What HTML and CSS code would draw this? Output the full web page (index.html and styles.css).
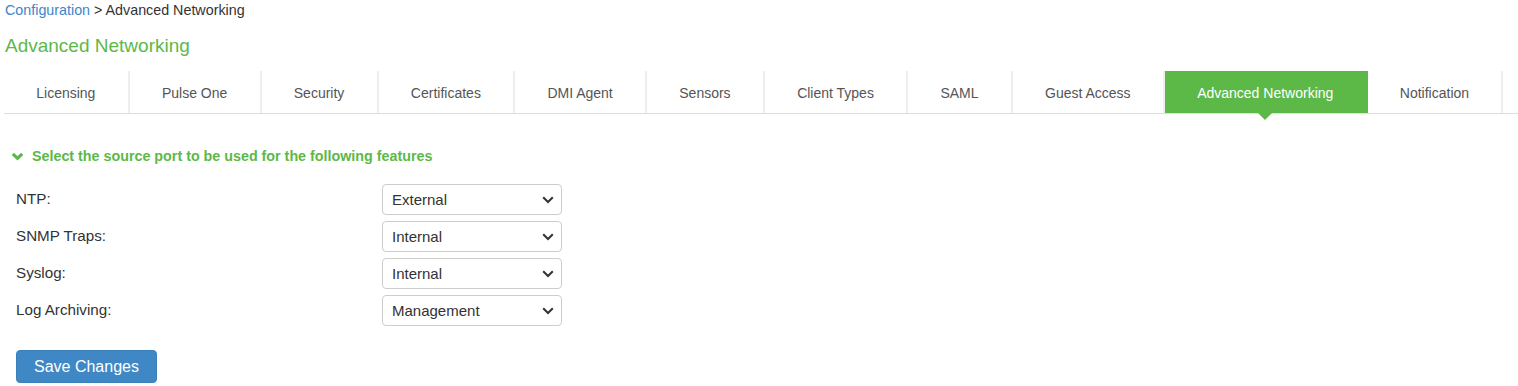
FILE: index.html
```html
<!DOCTYPE html>
<html>
<head>
<meta charset="utf-8">
<link rel="stylesheet" href="styles.css">
</head>
<body>
<div class="page">
  <div class="breadcrumb"><a class="crumb-link">Configuration</a> &gt; Advanced Networking</div>
  <h1 class="title">Advanced Networking</h1>
  <ul class="tabs">
    <li class="tab">Licensing</li>
    <li class="tab">Pulse One</li>
    <li class="tab">Security</li>
    <li class="tab">Certificates</li>
    <li class="tab">DMI Agent</li>
    <li class="tab">Sensors</li>
    <li class="tab">Client Types</li>
    <li class="tab">SAML</li>
    <li class="tab">Guest Access</li>
    <li class="tab active">Advanced Networking</li>
    <li class="tab">Notification</li>
  </ul>
  <div class="section">
    <div class="section-head">
      <svg class="chev" width="13" height="9" viewBox="0 0 13 9"><polyline points="1.8,1.8 6.5,6.3 11.2,1.8" fill="none" stroke="#5cb947" stroke-width="3.2"/></svg>
      <span>Select the source port to be used for the following features</span>
    </div>
    <div class="form">
      <div class="row">
        <label class="lbl">NTP:</label>
        <div class="sel-wrap">
          <select class="sel"><option>External</option></select>
          <svg class="sel-arrow" width="12" height="8" viewBox="0 0 12 8"><polyline points="1.2,1.2 6,6 10.8,1.2" fill="none" stroke="#333" stroke-width="2"/></svg>
        </div>
      </div>
      <div class="row">
        <label class="lbl">SNMP Traps:</label>
        <div class="sel-wrap">
          <select class="sel"><option>Internal</option></select>
          <svg class="sel-arrow" width="12" height="8" viewBox="0 0 12 8"><polyline points="1.2,1.2 6,6 10.8,1.2" fill="none" stroke="#333" stroke-width="2"/></svg>
        </div>
      </div>
      <div class="row">
        <label class="lbl">Syslog:</label>
        <div class="sel-wrap">
          <select class="sel"><option>Internal</option></select>
          <svg class="sel-arrow" width="12" height="8" viewBox="0 0 12 8"><polyline points="1.2,1.2 6,6 10.8,1.2" fill="none" stroke="#333" stroke-width="2"/></svg>
        </div>
      </div>
      <div class="row">
        <label class="lbl">Log Archiving:</label>
        <div class="sel-wrap">
          <select class="sel"><option>Management</option></select>
          <svg class="sel-arrow" width="12" height="8" viewBox="0 0 12 8"><polyline points="1.2,1.2 6,6 10.8,1.2" fill="none" stroke="#333" stroke-width="2"/></svg>
        </div>
      </div>
    </div>
    <button class="btn">Save Changes</button>
  </div>
</div>
</body>
</html>
```
FILE: styles.css
```css
* { box-sizing: border-box; }
html, body { margin: 0; padding: 0; background: #fff; }
body { font-family: "Liberation Sans", Arial, sans-serif; color: #333; }
.page { padding: 0 0 0 4px; }
.breadcrumb { font-size: 14.3px; line-height: 20px; padding-left: 1px; color: #333; }
.crumb-link { color: #3a87c8; text-decoration: none; }
.title { margin: 16px 0 0; padding-left: 1px; font-size: 19px; line-height: 20px; font-weight: normal; color: #5cb947; }
.tabs { list-style: none; margin: 15px 0 0; padding: 0; display: flex; border-bottom: 1px solid #ddd; }
.tab { position: relative; height: 42px; padding: 2px 32.25px 0; display: flex; align-items: center; font-size: 14px; color: #555; border-right: 2px solid #eee; white-space: nowrap; }
.tab.active { background: #5cb947; color: #fff; border-right-color: #5cb947; }
.tab.active::after { content: ""; position: absolute; left: 50%; bottom: -7px; margin-left: -7px; border-left: 7px solid transparent; border-right: 7px solid transparent; border-top: 7px solid #5cb947; }
.section { padding: 33px 0 0 7px; }
.section-head { display: flex; align-items: center; gap: 8px; font-size: 14.3px; line-height: 18px; font-weight: bold; color: #5cb947; }
.chev { display: block; }
.form { display: flex; flex-direction: column; gap: 6px; margin-top: 19px; padding-left: 5px; }
.row { display: flex; align-items: center; height: 31px; }
.lbl { width: 366px; font-size: 15.2px; color: #333; margin-top: -2px; }
.sel-wrap { position: relative; width: 180px; height: 31px; }
.sel { appearance: none; -webkit-appearance: none; width: 180px; height: 31px; border: 1px solid #ccc; border-radius: 4px; background: #fff; font-family: "Liberation Sans", Arial, sans-serif; font-size: 15px; color: #333; padding: 0 0 0 9px; outline: none; }
.sel-arrow { position: absolute; right: 8px; top: 12px; pointer-events: none; }
.btn { margin: 24px 0 0 5px; height: 33px; padding: 0 17px; background: #3f88c5; color: #fff; border: 1px solid #3a80bb; border-radius: 4px; font-family: "Liberation Sans", Arial, sans-serif; font-size: 16px; }
```
